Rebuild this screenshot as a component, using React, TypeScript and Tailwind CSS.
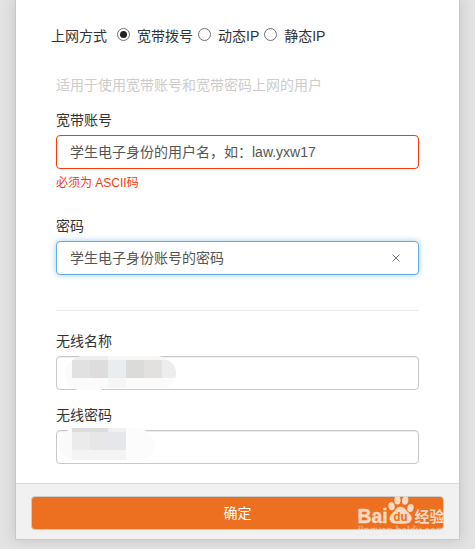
import React from 'react';

interface RadioOptionProps {
  label: string;
  checked?: boolean;
}

const RadioOption: React.FC<RadioOptionProps> = ({ label, checked = false }) => (
  <label className="flex items-start">
    <span className="mt-[3px] flex h-[13px] w-[13px] shrink-0 items-center justify-center rounded-full border border-[#707070] bg-white">
      {checked && <span className="h-[7px] w-[7px] rounded-full bg-[#222]" />}
    </span>
    <span className="ml-[7px] whitespace-nowrap">{label}</span>
  </label>
);

interface FieldProps {
  label: string;
  value?: string;
  state?: 'normal' | 'error' | 'focus';
  clearable?: boolean;
  children?: React.ReactNode;
}

const borders = {
  normal: 'border-[#c8c8c8] shadow-[inset_0_1px_1px_rgba(0,0,0,0.075)]',
  error: 'border-[#f8390c]',
  focus: 'border-[#62ace6] shadow-[0_0_6px_rgba(98,172,230,0.6)]',
};

const Field: React.FC<FieldProps> = ({ label, value = '', state = 'normal', clearable, children }) => (
  <div>
    <div className="h-[20px] leading-[20px] text-[#333]">{label}</div>
    <div className={`relative mt-[5px] flex h-[34px] w-[363px] items-center rounded-[4px] border bg-white pr-[18px] pl-[13px] ${borders[state]}`}>
      <span className="flex-1 whitespace-nowrap text-[#555]">{value}</span>
      {clearable && (
        <svg width="8" height="8" viewBox="0 0 8 8" fill="none" stroke="#777" strokeWidth="1">
          <path d="M0.5 0.5l7 7M7.5 0.5l-7 7" />
        </svg>
      )}
      {children}
    </div>
  </div>
);

// Mosaic that hides the wireless name
const NameMosaic = () => (
  <svg className="absolute -top-px left-[7px]" width="112" height="34" viewBox="0 0 112 34" shapeRendering="crispEdges">
    <defs>
      <clipPath id="name-clip">
        <path d="M17 0H94Q112 5 112 17Q112 32 96 32H38V34H14Q1 31 1 18Q1 6 17 0Z" />
      </clipPath>
    </defs>
    <g clipPath="url(#name-clip)">
      <rect width="112" height="34" fill="#fbfbfb" />
      <rect x="8" width="36" height="4" fill="#eeeeee" />
      <rect x="44" width="68" height="4" fill="#f7f7f7" />
      <rect x="8" y="4" width="18" height="18" fill="#e1e1e1" />
      <rect x="26" y="4" width="18" height="18" fill="#dfdcdd" />
      <rect x="44" y="4" width="18" height="18" fill="#e9edf0" />
      <rect x="62" y="4" width="18" height="18" fill="#dbdbd9" />
      <rect x="80" y="4" width="18" height="18" fill="#e2e1df" />
      <rect x="98" y="4" width="14" height="18" fill="#ededed" />
      <rect x="44" y="22" width="18" height="10" fill="#f6f6f6" />
    </g>
  </svg>
);

// Mosaic that hides the wireless password
const PasswordMosaic = () => (
  <svg className="absolute -top-[3px] left-[2px]" width="95" height="32" viewBox="0 0 95 32" shapeRendering="crispEdges">
    <defs>
      <clipPath id="pwd-clip">
        <path d="M14 0H81Q95 6 95 17Q95 32 78 32H15Q0 30 0 17Q0 5 14 0Z" />
      </clipPath>
    </defs>
    <g clipPath="url(#pwd-clip)">
      <rect width="95" height="32" fill="#fafafa" />
      <rect x="67" width="28" height="32" fill="#fcfcfc" />
      <rect x="13" width="36" height="4" fill="#dcdcdc" />
      <rect x="49" width="18" height="4" fill="#f0f0f0" />
      <rect x="13" y="4" width="18" height="18" fill="#ebebeb" />
      <rect x="31" y="4" width="18" height="18" fill="#e7e7e7" />
      <rect x="49" y="4" width="18" height="18" fill="#e5e7ea" />
      <rect x="13" y="22" width="54" height="10" fill="#f4f4f4" />
    </g>
  </svg>
);

const Watermark = () => (
  <svg className="absolute top-[9px] left-[341px]" width="92" height="46" viewBox="0 0 92 46">
    <g fill="#fbd9c2" fontFamily="'Liberation Sans', 'Noto Sans CJK SC', sans-serif" fontWeight="700">
      <text x="0.5" y="30" fontSize="20" stroke="#fbd9c2" strokeWidth="0.5" textLength="30" lengthAdjust="spacingAndGlyphs">Bai</text>
      <ellipse cx="34.5" cy="13.2" rx="3.1" ry="4.1" transform="rotate(-15 34.5 13.2)" />
      <ellipse cx="40.4" cy="7.2" rx="3.1" ry="4.2" />
      <ellipse cx="48.2" cy="7.5" rx="3.1" ry="4.2" transform="rotate(10 48.2 7.5)" />
      <ellipse cx="53.5" cy="15" rx="3.1" ry="4.1" transform="rotate(15 53.5 15)" />
      <path d="M43.500 13.800c4 0 5.200 3 7.700 5.500c3 3 4.200 5 3.200 7.800c-1.300 3.700-4.700 3.700-10.900 3.700s-9.500 0-10.700-3.700c-0.900-2.800 0.500-4.800 3.400-7.800c2.500-2.500 3.300-5.500 7.300-5.500z" />
      <text x="36.500" y="28.300" fontSize="13" fill="#ec7020" textLength="14" lengthAdjust="spacingAndGlyphs">du</text>
      <text x="57.500" y="28.500" fontSize="15" fontWeight="700">经验</text>
    </g>
    <text x="1" y="41" fontSize="10" fontWeight="700" fontFamily="'Liberation Sans', sans-serif" fill="#ffffff" fillOpacity="0.3" stroke="#dcdcdc" strokeOpacity="0.6" strokeWidth="0.3" textLength="87">
      jingyan.baidu.com
    </text>
  </svg>
);

const App: React.FC = () => {
  return (
    <div className="h-[549px] w-[475px] overflow-hidden bg-[#e3e3e3] pl-[15px] font-['Liberation_Sans','Noto_Sans_CJK_SC',sans-serif] text-[14px] text-[#333]">
      <div className="flex h-[540px] w-[445px] flex-col border-x border-b border-[#c8c8c8] bg-white shadow-[0_0_14px_rgba(0,0,0,0.14)]">
        {/* Connection type */}
        <div className="mt-[25px] flex h-[21px] shrink-0 items-start pl-[35px] leading-[22px]">
          <span className="mr-[10px]">上网方式</span>
          <div className="flex gap-[5px]">
            <RadioOption label="宽带拨号" checked />
            <RadioOption label="动态IP" />
            <RadioOption label="静态IP" />
          </div>
        </div>

        {/* Dial-up account */}
        <div className="flex-1 pl-[40px]">
          <p className="mt-[29px] h-[20px] leading-[20px] text-[#ccc]">适用于使用宽带账号和宽带密码上网的用户</p>
          <div className="mt-[15px]">
            <Field label="宽带账号" value="学生电子身份的用户名，如：law.yxw17" state="error" />
            <p className="mt-[5px] h-[18px] text-[12px] leading-[18px] text-[#f8390c]">必须为 ASCII码</p>
          </div>
          <div className="mt-[24px]">
            <Field label="密码" value="学生电子身份账号的密码" state="focus" clearable />
          </div>

          <hr className="mt-[35px] w-[363px] border-[#ebebeb]" />

          {/* Wireless */}
          <div className="mt-[20px] flex flex-col gap-[15px]">
            <Field label="无线名称">
              <NameMosaic />
            </Field>
            <Field label="无线密码">
              <PasswordMosaic />
            </Field>
          </div>
        </div>

        {/* Footer */}
        <div className="relative h-[56px] shrink-0 border-t border-[#d9d9d9] bg-[#f1f1f1] pt-[12px] pl-[15px]">
          <button className="block h-[34px] w-[413px] rounded-[4px] border border-[#ccc] bg-[#ec7020] text-white">确定</button>
          <Watermark />
        </div>
      </div>
    </div>
  );
};

export default App;
